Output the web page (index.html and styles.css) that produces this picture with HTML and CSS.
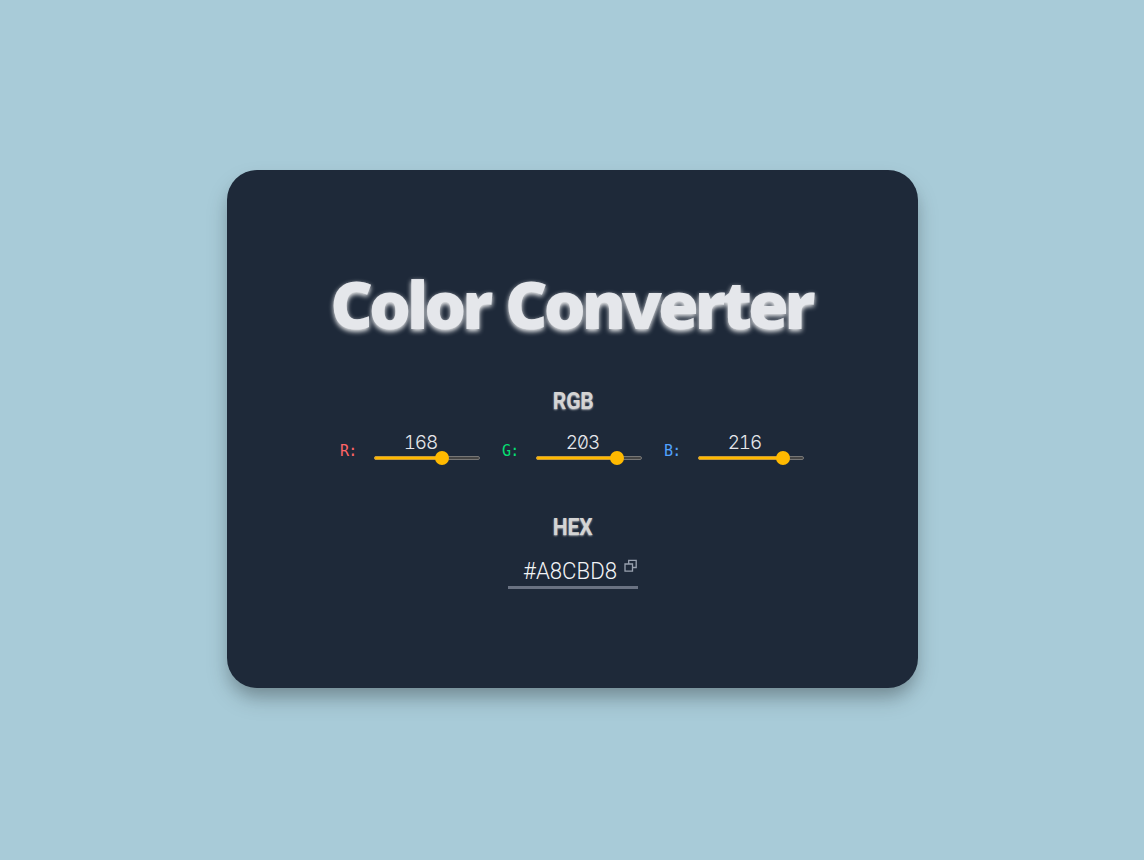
FILE: index.html
```html
<!DOCTYPE html>
<html lang="en">
<head>
<meta charset="utf-8">
<title>Color Converter</title>
<link rel="stylesheet" href="styles.css">
</head>
<body>
<main class="card">
  <h1 class="title">Color Converter</h1>
  <h2 class="label">RGB</h2>
  <section class="channels">
    <div class="channel"><span class="name red">R:</span><div class="control"><span class="value">168</span><div class="track"><div class="fill" style="width:67px"></div><div class="thumb"></div></div></div></div>
    <div class="channel"><span class="name green">G:</span><div class="control"><span class="value">203</span><div class="track"><div class="fill" style="width:80px"></div><div class="thumb"></div></div></div></div>
    <div class="channel"><span class="name blue">B:</span><div class="control"><span class="value">216</span><div class="track"><div class="fill" style="width:84px"></div><div class="thumb"></div></div></div></div>
  </section>
  <h2 class="label hex-label">HEX</h2>
  <div class="hex">
    <span class="hex-value">#A8CBD8</span>
    <svg class="copy" viewBox="0 0 14 14" width="14" height="14" fill="none" stroke="#99a1af" stroke-width="1.3"><path d="M1 5h7.500v7.200H1z"/><path d="M4.700 5V1.300H12.200V8.500H8.500"/></svg>
  </div>
</main>
</body>
</html>
```
FILE: styles.css
```css
* { box-sizing: border-box; }
body {
  margin: 0;
  height: 860px;
  padding-top: 170px;
  background: #a8cbd8;
  font-family: Inter, sans-serif;
}
.card {
  width: 691px;
  height: 518px;
  margin: 0 auto 0 227.4px;
  padding-top: 88px;
  display: flex;
  flex-direction: column;
  align-items: center;
  background: #1e2939;
  border-radius: 30px;
  box-shadow: 0 10px 15px -3px rgba(0,0,0,.15), 0 12px 25px -3px rgba(0,0,0,.22);
}
.title {
  margin: 0;
  padding-right: 4px;
  font: 800 66px/91px "Open Sans", sans-serif;
  letter-spacing: -4.1px;
  word-spacing: 3px;
  white-space: nowrap;
  color: #e5e7eb;
  text-shadow: 0 2px 5px #fff;
}
.label {
  margin: 36px 0 0;
  height: 32px;
  font: 700 24px/32px Roboto, sans-serif;
  letter-spacing: -.2px;
  transform: scaleX(.88);
  color: #d4d4d4;
  text-shadow: 0 1px 2px rgba(255,255,255,.6);
}
.channels {
  display: flex;
  gap: 22px;
  margin-top: 16px;
  padding-right: 1px;
}
.channel {
  display: flex;
  width: 140px;
  height: 36px;
}
.name {
  width: 34px;
  font: 16px/36px "DejaVu Sans Mono", monospace;
  letter-spacing: -.8px;
  transform: scaleX(.94);
  transform-origin: left;
}
.red { color: #ff6467; }
.green { color: #05df72; }
.blue { color: #51a2ff; }
.control { width: 106px; }
.value {
  display: block;
  width: 92px;
  height: 23px;
  text-align: center;
  font-size: 19px;
  font-weight: 300;
  line-height: 20px;
  letter-spacing: -1.2px;
  font-feature-settings: "zero", "tnum";
  color: #e5e7eb;
}
.track {
  display: flex;
  align-items: center;
  width: 106px;
  height: 4px;
  border: 1px solid #767676;
  border-radius: 2px;
  background: #454545;
}
.fill {
  height: 4px;
  margin-left: -1px;
  flex: none;
  border: 1px solid #c99a35;
  background: #ffb900;
  border-radius: 2px;
}
.thumb {
  flex: none;
  width: 14px;
  height: 14px;
  margin-left: -6px;
  border-radius: 50%;
  background: #ffb900;
}
.hex-label { margin-top: 42px; }
.hex {
  display: flex;
  width: 130px;
  height: 32px;
  margin-top: 14px;
  padding-left: 15px;
  border-bottom: 3px solid #6a7282;
}
.hex-value {
  width: 101px;
  font: 300 24px/28px Roboto, sans-serif;
  transform: scaleX(.925);
  transform-origin: left;
  color: #f3f4f6;
}
.copy { margin-top: 2px; flex: none; }
```
